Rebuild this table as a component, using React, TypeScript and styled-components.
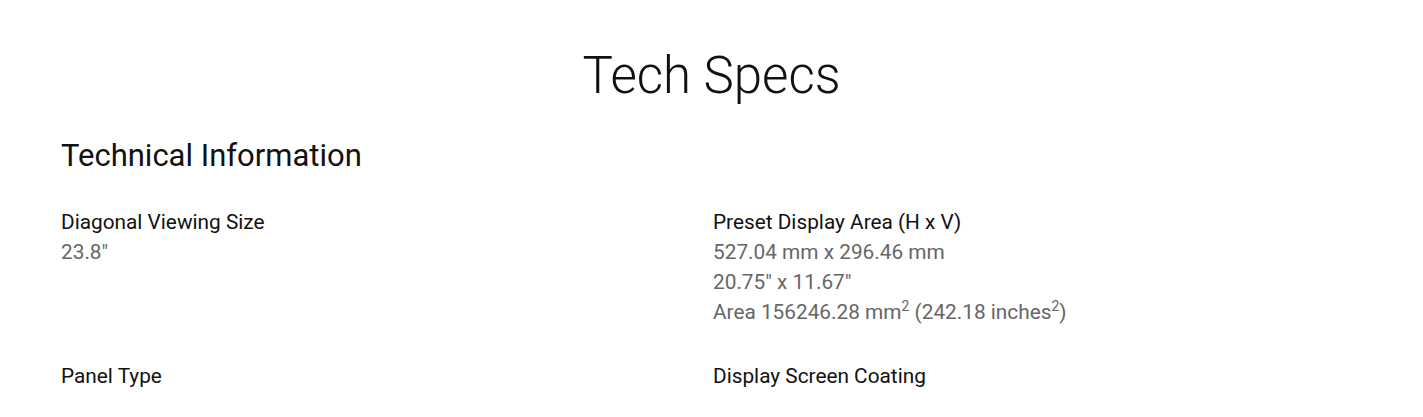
import * as React from "react";
import styled, { createGlobalStyle } from "styled-components";

const GlobalStyle = createGlobalStyle`
  body {
    margin: 0;
    background: #fff;
    font-family: Roboto, "Liberation Sans", sans-serif;
    color: #111;
  }
`;

interface ISpec {
  label: string;
  values: React.ReactNode[];
}

const specs: ISpec[] = [
  { label: "Diagonal Viewing Size", values: ['23.8"'] },
  {
    label: "Preset Display Area (H x V)",
    values: [
      "527.04 mm x 296.46 mm",
      '20.75" x 11.67"',
      <>
        Area 156246.28 mm<sup>2</sup> (242.18 inches<sup>2</sup>)
      </>,
    ],
  },
  { label: "Panel Type", values: [] },
  { label: "Display Screen Coating", values: [] },
];

export default function App() {
  return (
    <Page>
      <GlobalStyle />
      <Title>Tech Specs</Title>
      <Section>
        <SectionTitle>Technical Information</SectionTitle>
        <SpecGrid>
          {specs.map((s) => (
            <SpecItem key={s.label}>
              <SpecLabel>{s.label}</SpecLabel>
              {s.values.map((v, i) => (
                <SpecValue key={i}>{v}</SpecValue>
              ))}
            </SpecItem>
          ))}
        </SpecGrid>
      </Section>
    </Page>
  );
}

const Page = styled.div`
  width: 1423px;
  height: 417px;
  overflow: hidden;
  padding-top: 42px;
  box-sizing: border-box;
`;

const Title = styled.h1`
  margin: 0;
  text-align: center;
  font-size: 51px;
  line-height: 68px;
  font-weight: 300;
  color: #111;
`;

const Section = styled.section`
  padding: 28px 61px 0;
`;

const SectionTitle = styled.h2`
  margin: 0;
  font-size: 31px;
  line-height: 36px;
  font-weight: 400;
  color: #111;
`;

const SpecGrid = styled.div`
  display: grid;
  grid-template-columns: 652px 1fr;
  row-gap: 34px;
  margin-top: 33px;
`;

const SpecItem = styled.div`
  display: flex;
  flex-direction: column;
`;

const SpecLabel = styled.div`
  font-size: 20.8px;
  line-height: 30px;
  color: #111;
`;

const SpecValue = styled.div`
  font-size: 20.8px;
  line-height: 30px;
  color: #666;

  sup {
    font-size: 14px;
    line-height: 0;
    vertical-align: 8px;
  }
`;
